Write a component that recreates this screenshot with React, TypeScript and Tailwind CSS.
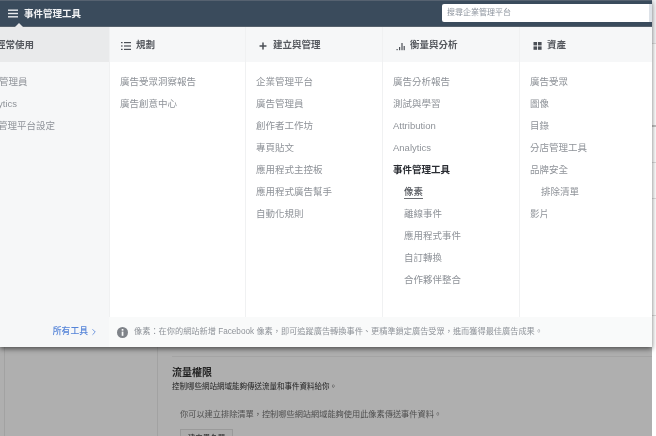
import { ChevronRight, Plus } from "lucide-react";

const COLUMNS = [
  {
    title: "規劃",
    width: "w-[136px]",
    items: [{ label: "廣告受眾洞察報告" }, { label: "廣告創意中心" }],
  },
  {
    title: "建立與管理",
    width: "w-[137px]",
    items: [
      { label: "企業管理平台" },
      { label: "廣告管理員" },
      { label: "創作者工作坊" },
      { label: "專頁貼文" },
      { label: "應用程式主控板" },
      { label: "應用程式廣告幫手" },
      { label: "自動化規則" },
    ],
  },
  {
    title: "衡量與分析",
    width: "w-[137px]",
    items: [
      { label: "廣告分析報告" },
      { label: "測試與學習" },
      { label: "Attribution" },
      { label: "Analytics" },
      { label: "事件管理工具", bold: true },
      { label: "像素", sub: true, current: true },
      { label: "離線事件", sub: true },
      { label: "應用程式事件", sub: true },
      { label: "自訂轉換", sub: true },
      { label: "合作夥伴整合", sub: true },
    ],
  },
  {
    title: "資產",
    width: "w-[133px]",
    items: [
      { label: "廣告受眾" },
      { label: "圖像" },
      { label: "目錄" },
      { label: "分店管理工具" },
      { label: "品牌安全" },
      { label: "排除清單", sub: true },
      { label: "影片" },
    ],
  },
];

function MenuIcon() {
  return (
    <svg width="10" height="9" viewBox="0 0 10 9" fill="#e9ebee">
      <rect x="0" y="0.5" width="10" height="1.4" />
      <rect x="0" y="3.8" width="10" height="1.4" />
      <rect x="0" y="7.1" width="10" height="1.4" />
    </svg>
  );
}

function ListIcon() {
  return (
    <svg width="10" height="10" viewBox="0 0 10 10" fill="#4b4f56">
      <rect x="0" y="1" width="1.6" height="1.2" />
      <rect x="3" y="1" width="7" height="1.2" />
      <rect x="0" y="4.4" width="1.6" height="1.2" />
      <rect x="3" y="4.4" width="7" height="1.2" />
      <rect x="0" y="7.8" width="1.6" height="1.2" />
      <rect x="3" y="7.8" width="7" height="1.2" />
    </svg>
  );
}

function BarsIcon() {
  return (
    <svg width="10" height="10" viewBox="0 0 10 10" fill="#4b4f56">
      <rect x="0.5" y="8" width="1.2" height="1.2" />
      <rect x="3" y="6" width="1.2" height="3.2" />
      <rect x="5.4" y="2" width="1.2" height="7.2" />
      <rect x="7.6" y="5" width="1.2" height="4.2" />
    </svg>
  );
}

function GridIcon() {
  return (
    <svg width="10" height="10" viewBox="0 0 10 10" fill="#4b4f56">
      <rect x="0.5" y="1" width="3.6" height="3.4" />
      <rect x="5" y="1" width="3.6" height="3.4" />
      <rect x="0.5" y="5.4" width="3.6" height="3.4" />
      <rect x="5" y="5.4" width="3.6" height="3.4" />
    </svg>
  );
}

function InfoDot() {
  return (
    <svg width="11" height="11" viewBox="0 0 11 11">
      <circle cx="5.5" cy="5.5" r="5.5" fill="#7f8389" />
      <rect x="4.7" y="2" width="1.7" height="1.7" fill="#f9fafa" />
      <rect x="4.7" y="4.6" width="1.7" height="4.2" fill="#f9fafa" />
    </svg>
  );
}

function columnIcon(title: string) {
  if (title === "規劃") return <ListIcon />;
  if (title === "建立與管理")
    return <Plus size={10} strokeWidth={3.6} className="-ml-px text-[#4b4f56]" />;
  if (title === "衡量與分析") return <BarsIcon />;
  return <GridIcon />;
}

function Column({ column, first }: { column: (typeof COLUMNS)[number]; first?: boolean }) {
  return (
    <div className={`${column.width} flex shrink-0 flex-col border-l border-[#f0f1f2]`}>
      <div
        className={`flex h-[35px] items-center bg-[#f6f7f8] pt-[2px] text-[9.5px] font-semibold text-[#55585e] ${
          first ? "pl-[11px]" : "pl-[13px]"
        }`}
      >
        <span className={`flex shrink-0 items-center ${first ? "w-[15px]" : "w-[14px]"}`}>
          {columnIcon(column.title)}
        </span>
        <span>{column.title}</span>
      </div>
      <ul className="flex flex-col pt-[9px]">
        {column.items.map((item) => (
          <li
            key={item.label}
            className={`flex h-[22px] items-center text-[9.5px] ${item.sub ? "pl-[21px]" : "pl-[10px]"} ${
              item.bold ? "font-semibold text-[#2a2d33]" : "text-[#8f9399]"
            }`}
          >
            <span
              className={
                item.current
                  ? "border-b border-[#6a6d72] font-medium leading-[12px] text-[#55585e]"
                  : ""
              }
            >
              {item.label}
            </span>
          </li>
        ))}
      </ul>
    </div>
  );
}

function PageBehind() {
  return (
    <div className="flex h-[436px] w-[652px] bg-[#afafaf] pl-[4px] text-[#2b2b2b]">
      <div className="w-[154px] shrink-0 border-x border-[#a2a2a2]" />
      <div className="flex-1 pl-[14px] pt-[356px]">
        <div className="border-t border-[#a4a4a4] pt-[9px]">
          <h2 className="text-[10px] font-semibold leading-[14px] text-[#222222]">流量權限</h2>
          <p className="mt-[1px] text-[7.5px] leading-[11px] text-[#222222]">
            控制哪些網站網域能夠傳送流量和事件資料給你。
          </p>
          <p className="mt-[17px] pl-[8px] text-[8.2px] leading-[12px] text-[#4f4f4f]">
            你可以建立排除清單，控制哪些網站網域能夠使用此像素傳送事件資料。
          </p>
          <button className="ml-[8px] mt-[8px] h-[20px] w-[53px] border border-[#9a9a9a] bg-[#ababab] text-[7.5px] font-medium text-[#333333]">
            建立黑名單
          </button>
        </div>
      </div>
    </div>
  );
}

export default function App() {
  return (
    <div
      lang="zh-TW"
      className="relative h-[436px] w-[656px] overflow-hidden bg-white blur-[0.5px]"
      style={{ fontFamily: '"Liberation Sans", "Noto Sans CJK TC", sans-serif' }}
    >
      <PageBehind />

      {/* strip of the page at the right edge, not covered by the menu */}
      <div className="absolute right-0 top-0 flex h-full w-[4px] flex-col bg-white">
        <div className="h-[44px] border-b border-[#dddddd] bg-[#f3f4f6]" />
        <div className="mt-[81px] h-[2px] bg-[#c4c4c4]" />
        <div className="mt-[35px] h-px bg-[#dddddd]" />
        <div className="mt-[35px] h-px bg-[#dddddd]" />
        <div className="mt-[116px] h-px bg-[#dddddd]" />
      </div>

      <div className="absolute left-0 top-0 w-[652px] shadow-[0_2px_5px_rgba(0,0,0,0.55)]">
        <header className="relative flex h-[27px] items-center border-y border-t-[#566270] border-b-[#56616c] bg-[#3a4b5c] text-white">
          <span className="ml-[8px]">
            <MenuIcon />
          </span>
          <span className="ml-[6px] pt-px text-[9.5px] font-semibold text-[#f2f3f5]">事件管理工具</span>
          <div className="ml-auto flex h-[18px] w-[210px] -translate-y-px overflow-hidden rounded-l-[2px] bg-white text-[8px] text-[#8d949e]">
            <span className="flex flex-1 items-center pl-[5px]">搜尋企業管理平台</span>
            <span className="w-[3px] bg-[#dde2e8]" />
          </div>
          <span className="absolute left-[15px] top-[22px] size-0 border-x-[4px] border-b-[4px] border-x-transparent border-b-[#e9eaeb]" />
        </header>

        <div className="flex h-[290px] bg-white">
          <div className="flex w-[109px] shrink-0 flex-col overflow-hidden bg-[#f6f7f8]">
            <div className="flex h-[35px] items-center bg-[#e9eaeb] pt-[2px] text-[9.5px] font-semibold text-[#55585e]">
              <span className="-ml-[4px] whitespace-nowrap">經常使用</span>
            </div>
            <ul className="flex flex-col whitespace-nowrap pt-[9px] text-[9.5px] text-[#8f9399]">
              <li className="-ml-[20px] flex h-[22px] items-center">廣告管理員</li>
              <li className="-ml-[21px] flex h-[22px] items-center">Analytics</li>
              <li className="-ml-[21px] flex h-[22px] items-center">企業管理平台設定</li>
            </ul>
          </div>
          {COLUMNS.map((column, i) => (
            <Column key={column.title} column={column} first={i === 0} />
          ))}
        </div>

        <footer className="flex h-[30px] items-center">
          <div className="flex h-full w-[109px] shrink-0 items-center justify-end gap-px bg-[#f6f7f8] pr-[10px] text-[8.8px] font-medium text-[#5584d8]">
            所有工具
            <ChevronRight size={10} strokeWidth={2} />
          </div>
          <div className="flex h-full flex-1 items-center bg-[#f9fafa] pl-[8px] text-[8.2px] text-[#8f9399]">
            <InfoDot />
            <span className="ml-[6px] pt-px">
              像素：在你的網站新增 Facebook 像素，即可追蹤廣告轉換事件、更精準鎖定廣告受眾，進而獲得最佳廣告成果。
            </span>
          </div>
        </footer>
      </div>
    </div>
  );
}
